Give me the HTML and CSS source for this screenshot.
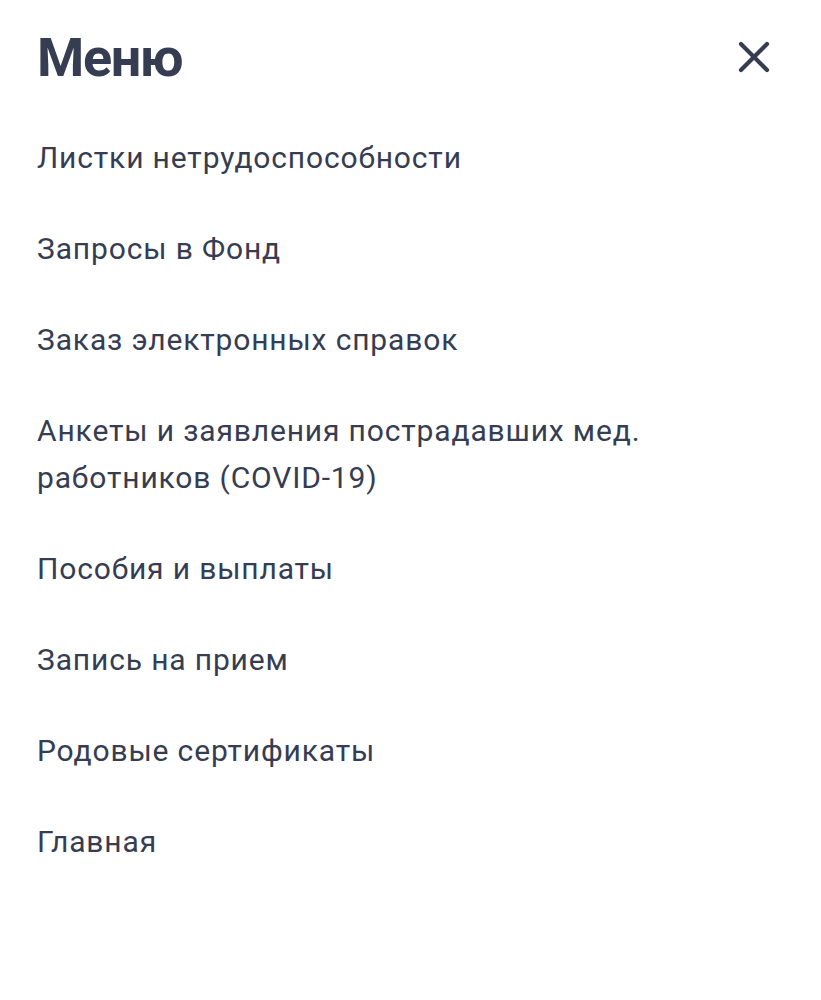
FILE: index.html
```html
<!DOCTYPE html>
<html lang="ru">
<head>
<meta charset="utf-8">
<title>Меню</title>
<link rel="stylesheet" href="styles.css">
</head>
<body>
<div class="menu">
  <header class="menu-head">
    <h1 class="menu-title">Меню</h1>
    <button class="menu-close" aria-label="Закрыть">
      <svg width="34" height="34" viewBox="0 0 34 34"><path d="M4 4L30 30M30 4L4 30" stroke="#363d52" stroke-width="4.2" stroke-linecap="round" fill="none"/></svg>
    </button>
  </header>
  <nav class="menu-list">
    <a class="menu-item" href="#">Листки нетрудоспособности</a>
    <a class="menu-item" href="#">Запросы в Фонд</a>
    <a class="menu-item" href="#">Заказ электронных справок</a>
    <a class="menu-item" href="#">Анкеты и заявления пострадавших мед. работников (COVID-19)</a>
    <a class="menu-item" href="#">Пособия и выплаты</a>
    <a class="menu-item" href="#">Запись на прием</a>
    <a class="menu-item" href="#">Родовые сертификаты</a>
    <a class="menu-item" href="#">Главная</a>
  </nav>
</div>
</body>
</html>
```
FILE: styles.css
```css
html, body {
  margin: 0;
  padding: 0;
  background: #ffffff;
}
body {
  font-family: Roboto, "Noto Sans", sans-serif;
  color: #363d52;
}
.menu {
  padding: 22px 50px 0 37px;
}
.menu-head {
  display: flex;
  justify-content: space-between;
  align-items: center;
  height: 70px;
}
.menu-title {
  margin: 0;
  font-size: 54px;
  font-weight: 700;
  letter-spacing: -1.4px;
  color: #363d52;
}
.menu-close {
  background: none;
  border: 0;
  padding: 0;
  width: 34px;
  height: 34px;
  display: flex;
}
.menu-list {
  display: flex;
  flex-direction: column;
  gap: 44px;
  margin-top: 42px;
  width: 660px;
}
.menu-item {
  font-size: 30px;
  line-height: 47px;
  letter-spacing: 0.85px;
  color: #363d52;
  text-decoration: none;
}
```
